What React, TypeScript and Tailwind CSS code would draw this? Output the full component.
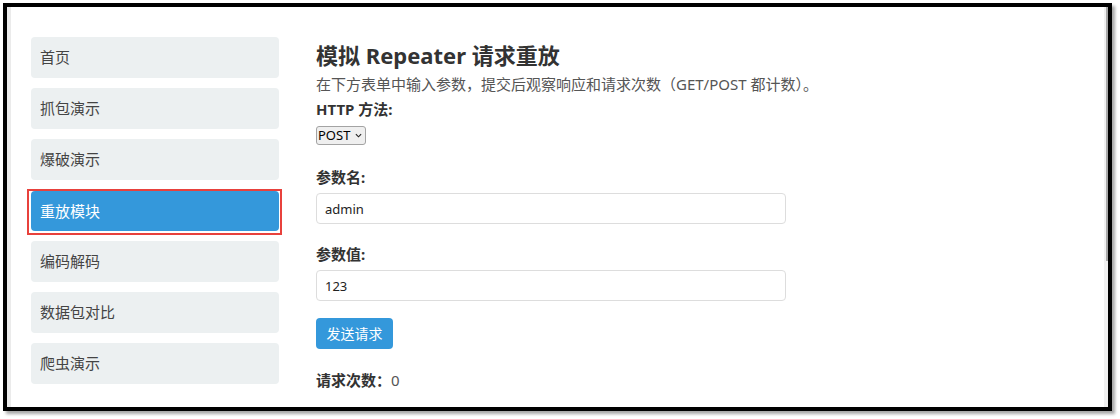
import React, { useState } from 'react';

const NAV_ITEMS = ['首页', '抓包演示', '爆破演示', '重放模块', '编码解码', '数据包对比', '爬虫演示'];

const font = { fontFamily: '"Noto Sans", "Noto Sans CJK SC", sans-serif' };

const Sidebar: React.FC<{ active: string }> = ({ active }) => (
  <aside className="w-[292px] shrink-0 border-l-4 border-[#ebebeb] pl-[20px] pt-[30px] flex flex-col items-start gap-[10px]">
    {NAV_ITEMS.map(item =>
      item === active ? (
        // highlighted entry with the red outline around it
        <div key={item} className="-ml-[4px] -mt-[1px] -mb-[4px] border-2 border-[#e8413c] pl-[2px] pr-[1px] pb-[2px]">
          <div className="h-[40px] w-[248px] rounded-[4px] bg-[#3498db] px-[9px] flex items-center text-[15px] text-white">
            {item}
          </div>
        </div>
      ) : (
        <div key={item} className="h-[41px] w-[248px] rounded-[4px] bg-[#ecf0f1] px-[9px] flex items-center text-[15px] text-[#444]">
          {item}
        </div>
      )
    )}
  </aside>
);

const RepeaterForm: React.FC = () => {
  const [method, setMethod] = useState('POST');
  const [name, setName] = useState('admin');
  const [value, setValue] = useState('123');
  const [count, setCount] = useState(0);

  return (
    <main className="flex-1 pl-[17px] pt-[34px] text-[#333]">
      <h2 className="text-[22px] font-bold leading-[28px]">模拟 Repeater 请求重放</h2>
      <p className="mt-[4px] text-[15px] leading-[22px] text-[#555]">
        在下方表单中输入参数，提交后观察响应和请求次数（GET/POST 都计数）。
      </p>
      <label className="mt-[3px] block text-[15px] font-bold leading-[22px]">HTTP 方法:</label>
      <div className="relative mt-[6px] w-[50px]">
        <select
          value={method}
          onChange={e => setMethod(e.target.value)}
          className="block h-[19px] w-[50px] appearance-none rounded-[3px] border border-[#a3a3a3] bg-[#efefef] pl-[1px] text-[13px] leading-[17px] text-black outline-none"
        >
          <option>POST</option>
          <option>GET</option>
        </select>
        <svg
          viewBox="0 0 8 5"
          className="pointer-events-none absolute right-[4px] top-[7px] h-[5px] w-[7px]"
          fill="none"
          stroke="#222"
          strokeWidth="1.3"
        >
          <path d="M1 1l3 3 3-3" />
        </svg>
      </div>

      <label className="mt-[21px] block text-[15px] font-bold leading-[22px]">参数名:</label>
      <input
        value={name}
        onChange={e => setName(e.target.value)}
        className="mt-[5px] block h-[31px] w-[470px] rounded-[4px] border border-[#ddd] px-[8px] text-[13px] text-[#222] outline-none"
      />

      <label className="mt-[19px] block text-[15px] font-bold leading-[22px]">参数值:</label>
      <input
        value={value}
        onChange={e => setValue(e.target.value)}
        className="mt-[5px] block h-[31px] w-[470px] rounded-[4px] border border-[#ddd] px-[8px] text-[13px] text-[#222] outline-none"
      />

      <button
        onClick={() => setCount(count + 1)}
        className="mt-[17px] h-[31px] w-[77px] rounded-[4px] bg-[#3498db] text-[14px] text-white"
      >
        发送请求
      </button>

      <p className="mt-[20px] text-[15px] leading-[22px]">
        <span className="font-bold">请求次数：</span>
        <span className="text-[#555]">{count}</span>
      </p>
    </main>
  );
};

export default function App() {
  return (
    <div className="h-[419px] w-[1120px] bg-white pl-[3px] pt-[3px]" style={font}>
      <div className="h-[408px] w-[1109px] border-4 border-black shadow-[3px_3px_3px_rgba(0,0,0,0.35)] flex overflow-hidden">
        <Sidebar active="重放模块" />
        <RepeaterForm />
        <div className="w-[4px] shrink-0 bg-[#f0f0f0] flex">
          <div className="ml-[2px] h-[254px] w-[2px] bg-[#a8a8a8]" />
        </div>
      </div>
    </div>
  );
}
